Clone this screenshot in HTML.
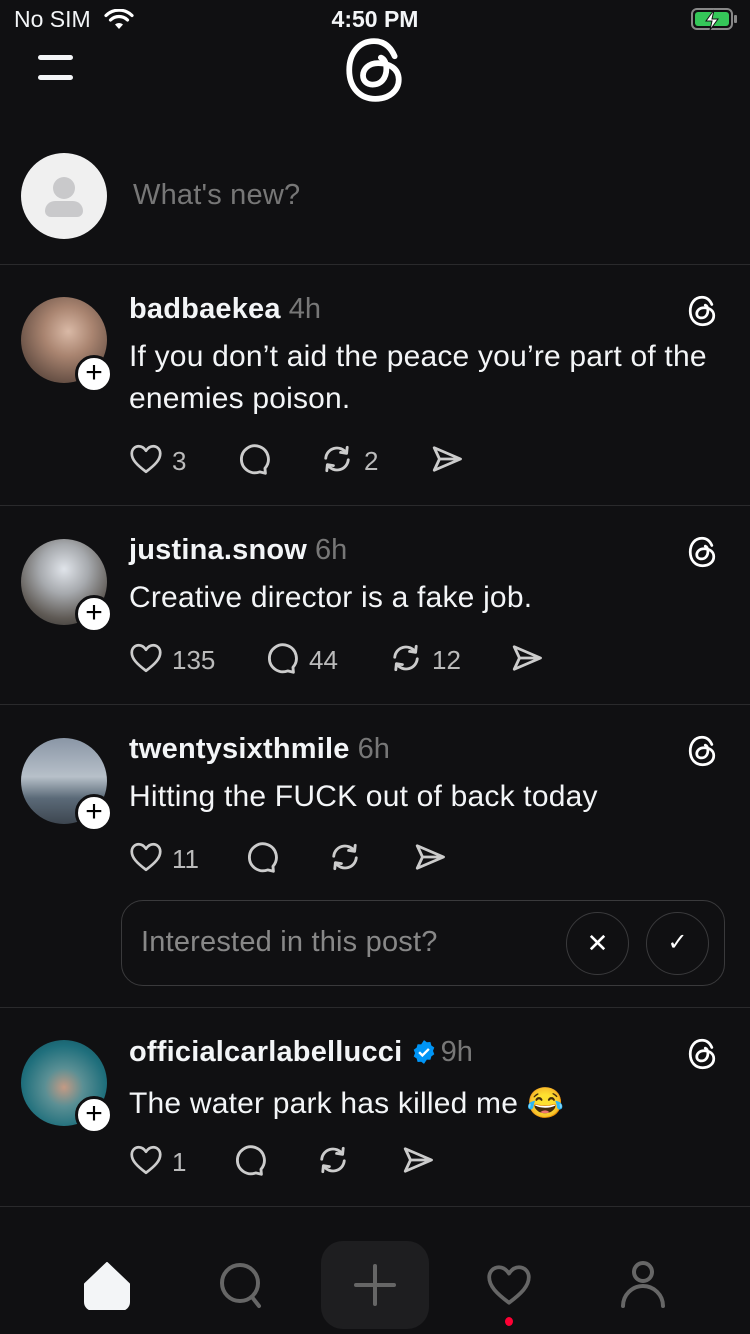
<!DOCTYPE html>
<html><head><meta charset="utf-8"><style>
*{margin:0;padding:0;box-sizing:border-box}
body{width:750px;height:1334px;background:#101012;color:#f3f5f7;font-family:"Liberation Sans",sans-serif;position:relative;overflow:hidden}
.a{position:absolute}
.hr{position:absolute;left:0;width:750px;height:1px;background:#2a2a2c}
.av{position:absolute;left:21px;width:86px;height:86px;border-radius:50%}
.plus{position:absolute;left:75px;width:38px;height:38px;border-radius:50%;background:#fff;border:3px solid #101012;color:#000;font-size:30px;line-height:30px;text-align:center}
.name{position:absolute;left:129px;font-size:29px;font-weight:bold;color:#f3f5f7;letter-spacing:0.2px}
.name span{font-weight:normal;color:#777;margin-left:8px;letter-spacing:0}
.txt{position:absolute;left:129px;font-size:30px;line-height:42px;color:#f3f5f7;letter-spacing:0.2px}
.ic{position:absolute;width:36px;height:36px}
.cnt{position:absolute;font-size:26px;color:#bbb}
.tl{position:absolute;left:685px;width:34px;height:34px}
</style></head><body>
<svg width="0" height="0" style="position:absolute">
<defs>
<symbol id="heart" viewBox="0 0 24 24"><path d="M12 20.5C6 16 2.5 12.5 2.5 8.3 2.5 5.5 4.6 3.5 7.2 3.5c2 0 3.6 1.2 4.8 3 1.2-1.8 2.8-3 4.8-3 2.6 0 4.7 2 4.7 4.8 0 4.2-3.5 7.7-9.5 12.2z" fill="none" stroke="currentColor" stroke-width="1.8" stroke-linejoin="round"/></symbol>
<symbol id="cmt" viewBox="0 0 24 24"><path d="M19.3 18.2A9 9 0 1 0 15.8 20.6l3.8.9z" fill="none" stroke="currentColor" stroke-width="1.9" stroke-linejoin="round"/></symbol>
<symbol id="rep" viewBox="0 0 24 24"><g fill="none" stroke="currentColor" stroke-width="1.9" stroke-linecap="round" stroke-linejoin="round"><path d="M4.5 11.5A7.5 7.5 0 0 1 18.2 8"/><path d="M18.8 4.2l-.4 4-4-.6"/><path d="M19.5 12.5A7.5 7.5 0 0 1 5.8 16"/><path d="M5.2 19.8l.4-4 4 .6"/></g></symbol>
<symbol id="shr" viewBox="0 0 24 24"><path d="M3.5 4.5L21 12 3.5 19.5 7 12z M7 12h14" fill="none" stroke="currentColor" stroke-width="1.9" stroke-linejoin="round"/></symbol>
<symbol id="tl" viewBox="0 0 24 26"><path d="M19.5 8C18 4.5 15.5 2.5 12 2.5 6.5 2.5 3 7 3 13c0 6.5 4 10.5 9.5 10.5 5 0 8.5-3 8.5-7 0-4-3.5-6-7.5-6C10 10.5 8 12.8 8 15c0 2 1.5 3.3 3.5 3.3 3 0 5-2.3 5-5.8 0-2-.7-3.5-2-4" fill="none" stroke="currentColor" stroke-width="2.1" stroke-linecap="round"/></symbol>
</defs></svg>

<!-- status bar -->
<div class="a" style="left:14px;top:6px;font-size:23px">No SIM</div>
<svg class="a" style="left:104px;top:9px" width="30" height="22" viewBox="0 0 30 22"><path d="M15 20l-4-4.5a6 6 0 0 1 8 0z" fill="#fff"/><path d="M6.5 11a12 12 0 0 1 17 0M2 6.5a18.5 18.5 0 0 1 26 0" fill="none" stroke="#fff" stroke-width="3.2" stroke-linecap="round"/></svg>
<div class="a" style="left:0;width:750px;text-align:center;top:6px;font-size:23px;font-weight:bold">4:50 PM</div>
<div class="a" style="left:691px;top:8px;width:42px;height:22px;border:2px solid #888;border-radius:6px;padding:2px"><div style="width:100%;height:100%;background:#35c759;border-radius:3px"></div></div>
<div class="a" style="left:734px;top:15px;width:3px;height:8px;background:#888;border-radius:1px"></div>
<svg class="a" style="left:702px;top:9px" width="20" height="22" viewBox="0 0 20 22"><path d="M12 1L4 12h6l-2 9 8-11h-6z" fill="#fff" stroke="#101012" stroke-width="1"/></svg>

<!-- header -->
<div class="a" style="left:38px;top:55px;width:35px;height:5px;border-radius:3px;background:#f3f5f7"></div>
<div class="a" style="left:38px;top:75px;width:35px;height:5px;border-radius:3px;background:#f3f5f7"></div>
<svg class="a" style="left:341px;top:34px;color:#fff" width="66" height="72" viewBox="0 0 24 26"><use href="#tl"/></svg>

<!-- composer -->
<div class="a" style="left:21px;top:153px;width:86px;height:86px;border-radius:50%;background:#f0f0f0"></div>
<div class="a" style="left:53px;top:177px;width:22px;height:22px;border-radius:50%;background:#c9c9cb"></div>
<div class="a" style="left:45px;top:201px;width:38px;height:16px;border-radius:10px 10px 6px 6px;background:#c9c9cb"></div>
<div class="a" style="left:133px;top:179px;font-size:29px;color:#777;letter-spacing:0.2px">What's new?</div>
<div class="hr" style="top:264px"></div>

<!-- post 1 -->
<div class="av" style="top:297px;background:radial-gradient(circle at 55% 40%,#d9b9a6 0,#a98470 35%,#6d5549 70%,#3c302a 100%)"></div>
<div class="plus" style="top:355px">+</div>
<div class="name" style="top:293px">badbaekea<span>4h</span></div>
<svg class="tl" style="top:294px;color:#fff" viewBox="0 0 24 26"><use href="#tl"/></svg>
<div class="txt" style="top:336px">If you don’t aid the peace you’re part of the<br>enemies poison.</div>
<svg class="ic" style="left:128px;top:441px;color:#ccc"><use href="#heart"/></svg><div class="cnt" style="left:172px;top:446px">3</div>
<svg class="ic" style="left:236px;top:441px;color:#ccc"><use href="#cmt"/></svg>
<svg class="ic" style="left:319px;top:441px;color:#ccc"><use href="#rep"/></svg><div class="cnt" style="left:364px;top:446px">2</div>
<svg class="ic" style="left:429px;top:441px;color:#ccc"><use href="#shr"/></svg>
<div class="hr" style="top:505px"></div>

<!-- post 2 -->
<div class="av" style="top:539px;background:radial-gradient(circle at 50% 35%,#e0e4ea 0,#a6a9ad 35%,#5f5a55 70%,#2b2a29 100%)"></div>
<div class="plus" style="top:595px">+</div>
<div class="name" style="top:534px">justina.snow<span>6h</span></div>
<svg class="tl" style="top:535px;color:#fff" viewBox="0 0 24 26"><use href="#tl"/></svg>
<div class="txt" style="top:577px">Creative director is a fake job.</div>
<svg class="ic" style="left:128px;top:640px;color:#ccc"><use href="#heart"/></svg><div class="cnt" style="left:172px;top:645px">135</div>
<svg class="ic" style="left:264px;top:640px;color:#ccc"><use href="#cmt"/></svg><div class="cnt" style="left:309px;top:645px">44</div>
<svg class="ic" style="left:388px;top:640px;color:#ccc"><use href="#rep"/></svg><div class="cnt" style="left:432px;top:645px">12</div>
<svg class="ic" style="left:509px;top:640px;color:#ccc"><use href="#shr"/></svg>
<div class="hr" style="top:704px"></div>

<!-- post 3 -->
<div class="av" style="top:738px;background:linear-gradient(180deg,#8a96a6 0,#b7c0c9 45%,#5b6a78 70%,#3d4650 100%)"></div>
<div class="plus" style="top:794px">+</div>
<div class="name" style="top:733px">twentysixthmile<span>6h</span></div>
<svg class="tl" style="top:734px;color:#fff" viewBox="0 0 24 26"><use href="#tl"/></svg>
<div class="txt" style="top:776px">Hitting the FUCK out of back today</div>
<svg class="ic" style="left:128px;top:839px;color:#ccc"><use href="#heart"/></svg><div class="cnt" style="left:172px;top:844px">11</div>
<svg class="ic" style="left:244px;top:839px;color:#ccc"><use href="#cmt"/></svg>
<svg class="ic" style="left:327px;top:839px;color:#ccc"><use href="#rep"/></svg>
<svg class="ic" style="left:412px;top:839px;color:#ccc"><use href="#shr"/></svg>
<div class="a" style="left:121px;top:900px;width:604px;height:86px;border:1.5px solid #3a3a3c;border-radius:22px"></div>
<div class="a" style="left:141px;top:926px;font-size:29px;color:#888;letter-spacing:0.2px">Interested in this post?</div>
<div class="a" style="left:566px;top:912px;width:63px;height:63px;border:1.5px solid #3a3a3c;border-radius:50%;text-align:center;line-height:60px;font-size:26px;color:#fff">✕</div>
<div class="a" style="left:646px;top:912px;width:63px;height:63px;border:1.5px solid #3a3a3c;border-radius:50%;text-align:center;line-height:60px;font-size:24px;color:#fff">✓</div>
<div class="hr" style="top:1007px"></div>

<!-- post 4 -->
<div class="av" style="top:1040px;background:radial-gradient(circle at 50% 55%,#c49a84 0,#5a8f94 30%,#1f6f7c 65%,#0f4a56 100%)"></div>
<div class="plus" style="top:1096px">+</div>
<div class="name" style="top:1036px">officialcarlabellucci <svg width="26" height="26" viewBox="0 0 24 24" style="vertical-align:-4px"><path d="M12 1l2.6 2 3.3-.2.9 3.2 2.7 1.9-1.2 3.1 1.2 3.1-2.7 1.9-.9 3.2-3.3-.2L12 23l-2.6-2-3.3.2-.9-3.2-2.7-1.9L3.7 13 2.5 9.9l2.7-1.9.9-3.2 3.3.2z" fill="#0095f6"/><path d="M7.5 12.2l3 3 6-6" fill="none" stroke="#fff" stroke-width="2.2"/></svg><span style="margin-left:4px">9h</span></div>
<svg class="tl" style="top:1037px;color:#fff" viewBox="0 0 24 26"><use href="#tl"/></svg>
<div class="txt" style="top:1079px">The water park has killed me <span style="font-family:'Noto Sans CJK SC',sans-serif">😂</span></div>
<svg class="ic" style="left:128px;top:1142px;color:#ccc"><use href="#heart"/></svg><div class="cnt" style="left:172px;top:1147px">1</div>
<svg class="ic" style="left:232px;top:1142px;color:#ccc"><use href="#cmt"/></svg>
<svg class="ic" style="left:315px;top:1142px;color:#ccc"><use href="#rep"/></svg>
<svg class="ic" style="left:400px;top:1142px;color:#ccc"><use href="#shr"/></svg>
<div class="hr" style="top:1206px"></div>

<!-- tab bar -->
<svg class="a" style="left:84px;top:1262px" width="46" height="48" viewBox="0 0 46 48"><path d="M23 1L45 22v18a8 8 0 0 1-8 8H9a8 8 0 0 1-8-8V22z" fill="#f3f5f7" stroke="#f3f5f7" stroke-linejoin="round" stroke-width="2"/></svg>
<svg class="a" style="left:218px;top:1262px" width="48" height="48" viewBox="0 0 48 48"><circle cx="22" cy="21" r="18" fill="none" stroke="#666" stroke-width="4"/><path d="M34 35l7 9" stroke="#666" stroke-width="4" stroke-linecap="round"/></svg>
<div class="a" style="left:321px;top:1241px;width:108px;height:88px;border-radius:22px;background:#1e1e20"></div>
<div class="a" style="left:354px;top:1283px;width:42px;height:4px;background:#666;border-radius:2px"></div>
<div class="a" style="left:373px;top:1264px;width:4px;height:42px;background:#666;border-radius:2px"></div>
<svg class="a" style="left:484px;top:1260px;color:#666" width="50" height="50" viewBox="0 0 24 24"><use href="#heart"/></svg>
<div class="a" style="left:505px;top:1317px;width:8px;height:9px;border-radius:50%;background:#ff0034"></div>
<svg class="a" style="left:620px;top:1260px" width="46" height="50" viewBox="0 0 46 50"><circle cx="23" cy="12" r="9" fill="none" stroke="#666" stroke-width="4"/><path d="M3 46a20 20 0 0 1 40 0" fill="none" stroke="#666" stroke-width="4" stroke-linecap="round"/></svg>
</body></html>
